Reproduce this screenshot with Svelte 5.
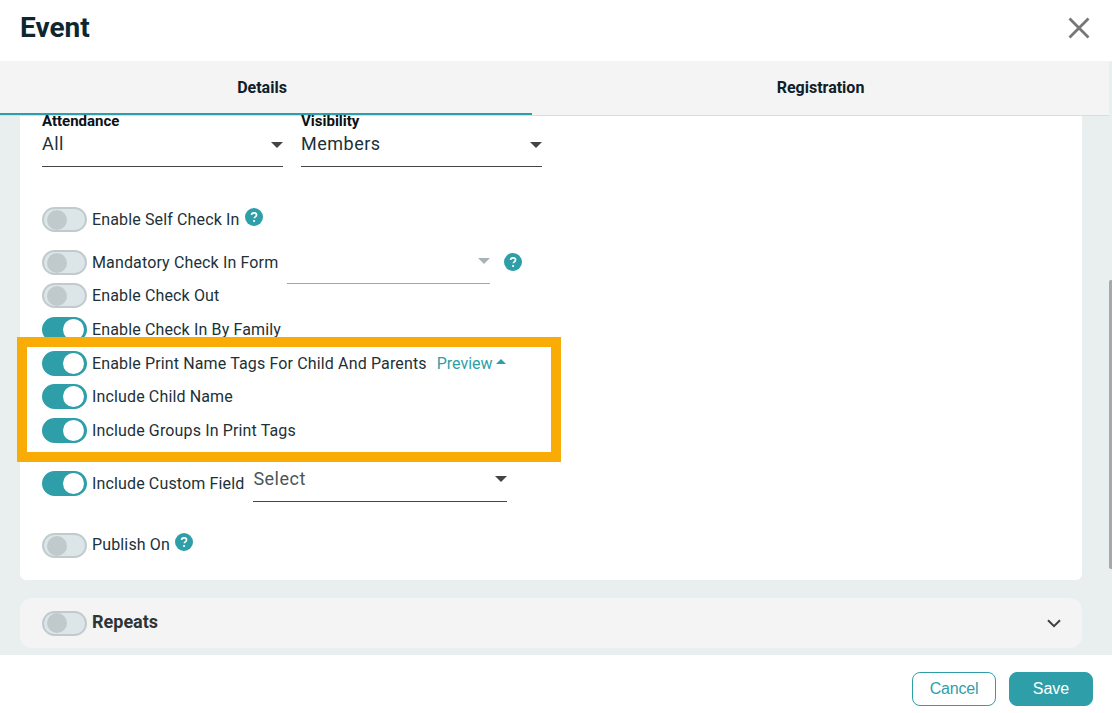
<script>
	// Event modal: details tab with check-in toggles
	const checkRows = [
		{ label: 'Enable Check Out', on: false, cls: 'r-out' },
		{ label: 'Enable Check In By Family', on: true, cls: 'r-family' }
	];
	const printRows = [
		{ label: 'Include Child Name', on: true },
		{ label: 'Include Groups In Print Tags', on: true }
	];
</script>

{#snippet toggle(on)}
	<span class="toggle" class:on><span class="knob"></span></span>
{/snippet}

{#snippet help()}
	<svg class="help" viewBox="0 0 18 18" width="18" height="18" aria-hidden="true">
		<circle cx="9" cy="9" r="9" fill="#2e9fa9" />
		<path d="M6.6 7.1c0-1.4 1.1-2.2 2.5-2.2s2.4.8 2.4 2c0 1-.6 1.5-1.3 2-.6.4-.8.7-.8 1.3" fill="none" stroke="#fff" stroke-width="1.7" />
		<circle cx="9.1" cy="13" r="1.1" fill="#fff" />
	</svg>
{/snippet}

{#snippet caret(cls)}
	<span class="caret {cls}"></span>
{/snippet}

<div class="modal">
	<header class="head">
		<h1>Event</h1>
		<svg class="close" viewBox="0 0 22 22" width="22" height="22" aria-label="Close">
			<path d="M1.5 1.5l19 19M20.5 1.5l-19 19" stroke="#777" stroke-width="2.8" fill="none" />
		</svg>
	</header>

	<main class="main">
		<nav class="tabs">
			<div class="tab active">Details</div>
			<div class="tab second">Registration</div>
		</nav>

		<div class="scroll">
			<section class="card">
				<div class="selects">
					<div class="field">
						<span class="field-label">Attendance</span>
						<div class="field-value"><span>All</span>{@render caret('')}</div>
					</div>
					<div class="field">
						<span class="field-label">Visibility</span>
						<div class="field-value"><span>Members</span>{@render caret('')}</div>
					</div>
				</div>

				<div class="row r-self">
					{@render toggle(false)}
					<span>Enable Self Check In</span>
					{@render help()}
				</div>

				<div class="row r-form">
					{@render toggle(false)}
					<span>Mandatory Check In Form</span>
					<div class="mini-select">{@render caret('light')}</div>
					{@render help()}
				</div>

				{#each checkRows as r}
					<div class="row {r.cls}">
						{@render toggle(r.on)}
						<span>{r.label}</span>
					</div>
				{/each}

				<div class="row r-print">
					{@render toggle(true)}
					<span>Enable Print Name Tags For Child And Parents</span>
					<a class="preview" href="#preview">Preview</a>
					{@render caret('up')}
				</div>

				{#each printRows as r}
					<div class="row r-print-sub">
						{@render toggle(r.on)}
						<span>{r.label}</span>
					</div>
				{/each}

				<div class="row r-custom">
					{@render toggle(true)}
					<span>Include Custom Field</span>
					<div class="custom-select"><span>Select</span>{@render caret('')}</div>
				</div>

				<div class="row r-publish">
					{@render toggle(false)}
					<span class="publish-label">Publish On</span>
					{@render help()}
				</div>

				<div class="highlight"></div>
			</section>

			<section class="repeats">
				{@render toggle(false)}
				<strong>Repeats</strong>
				<svg class="chev" viewBox="0 0 14 9" width="14" height="9" aria-hidden="true">
					<path d="M1 1.2l6 6 6-6" fill="none" stroke="#3a4245" stroke-width="2" />
				</svg>
			</section>

			<div class="scrollbar"></div>
		</div>
	</main>

	<footer class="foot">
		<button class="btn ghost">Cancel</button>
		<button class="btn solid">Save</button>
	</footer>
</div>

<style>
	:global(body) {
		margin: 0;
		background: #fff;
	}

	.modal {
		display: flex;
		flex-direction: column;
		height: 713px;
		overflow: hidden;
		font-family: Roboto, sans-serif;
		color: #1c3138;
	}

	.head {
		height: 61px;
		flex: none;
		display: flex;
		align-items: center;
		justify-content: space-between;
		padding: 0 22px 6px 20px;
		box-sizing: border-box;
	}

	h1 {
		margin: 0;
		font-size: 28px;
		font-weight: 700;
		color: #0c2730;
	}

	.main {
		flex: 1;
		min-height: 0;
		display: flex;
		flex-direction: column;
		background: #e9eeef;
	}

	.tabs {
		height: 55px;
		flex: none;
		display: flex;
		margin-right: 3px;
		background: #f4f4f4;
		border-bottom: 1px solid #d5dfe0;
		box-sizing: border-box;
	}

	.tab {
		display: flex;
		align-items: center;
		justify-content: center;
		font-size: 16px;
		font-weight: 700;
		color: #0f2029;
	}

	.tab.active {
		width: 532px;
		padding-right: 8px;
		box-sizing: border-box;
		height: 54px;
		border-bottom: 2px solid #2e9fa9;
	}

	.tab.second {
		flex: 1;
		height: 54px;
		padding-bottom: 2px;
		box-sizing: border-box;
	}

	.scroll {
		position: relative;
		flex: 1;
		min-height: 0;
		padding: 0 30px 0 20px;
	}

	.card {
		position: relative;
		height: 464px;
		padding: 0 22px;
		box-sizing: border-box;
		background: #fff;
		border-radius: 0 0 6px 6px;
	}

	.selects {
		display: flex;
		gap: 18px;
		height: 51px;
	}

	.field {
		width: 241px;
		height: 51px;
		border-bottom: 1px solid #444;
		box-sizing: border-box;
	}

	.field-label {
		display: block;
		font-size: 15px;
		font-weight: 700;
		line-height: 11px;
		color: #0b1114;
	}

	.field-value {
		display: flex;
		align-items: center;
		justify-content: space-between;
		margin-top: 4px;
		height: 24px;
		font-size: 18px;
		letter-spacing: 0.5px;
	}

	.field-value .caret {
		margin-top: 3px;
	}

	.caret {
		width: 0;
		height: 0;
		border-left: 6px solid transparent;
		border-right: 6px solid transparent;
		border-top: 6px solid #444;
		flex: none;
	}

	.caret.light {
		border-top-color: #a9b3b5;
		margin-top: 2px;
	}

	.caret.up {
		border-top: 0;
		border-left-width: 5px;
		border-right-width: 5px;
		border-bottom: 5px solid #2e9fa9;
		margin: -4px 0 0 -2px;
	}

	.row {
		display: flex;
		align-items: center;
		gap: 5px;
		height: 25px;
		font-size: 16px;
		letter-spacing: 0.14px;
		white-space: nowrap;
	}

	.r-self {
		margin-top: 40px;
	}

	.r-self .help {
		margin-top: -6px;
	}

	.r-publish .help {
		margin-top: -8px;
	}

	.r-form .help {
		margin-top: -1px;
	}

	.help {
		flex: none;
	}

	.r-form {
		margin-top: 18px;
	}

	.mini-select {
		width: 203px;
		height: 42px;
		margin: 0 9px 0 4px;
		display: flex;
		justify-content: flex-end;
		align-items: center;
		padding-bottom: 5px;
		box-sizing: border-box;
		border-bottom: 1px solid #9aa9ab;
	}

	.r-out {
		margin-top: 8px;
	}

	.r-family,
	.r-print {
		margin-top: 9px;
	}

	.r-print-sub {
		margin-top: 8px;
	}

	.r-print-sub + .r-print-sub {
		margin-top: 9px;
	}

	.preview {
		margin-left: 5px;
		color: #2e9fa9;
		text-decoration: none;
		letter-spacing: 0;
	}

	.r-custom {
		margin-top: 28px;
	}

	.custom-select {
		width: 254px;
		height: 37px;
		margin-left: 4px;
		padding-bottom: 9px;
		display: flex;
		align-items: center;
		justify-content: space-between;
		border-bottom: 1px solid #444;
		box-sizing: border-box;
		font-size: 18px;
		letter-spacing: 0.5px;
		color: #4b5558;
	}

	.r-publish {
		margin-top: 37px;
	}

	.publish-label {
		margin-top: -2px;
	}

	.toggle {
		flex: none;
		display: flex;
		align-items: center;
		width: 45px;
		height: 25px;
		padding: 0 3px;
		box-sizing: border-box;
		border: 2px solid #c1cbce;
		border-radius: 13px;
		background: #dce6e8;
	}

	.knob {
		width: 20px;
		height: 20px;
		border-radius: 50%;
		background: #c0c9cc;
	}

	.toggle.on {
		justify-content: flex-end;
		padding: 0 1px;
		border-color: #2e9fa9;
		background: #2e9fa9;
	}

	.toggle.on .knob {
		width: 21px;
		height: 21px;
		background: #fff;
	}

	.highlight {
		position: absolute;
		left: -3px;
		top: 221px;
		width: 544px;
		height: 125px;
		box-sizing: border-box;
		border: 10px solid #f9ab06;
		pointer-events: none;
	}

	.repeats {
		display: flex;
		align-items: center;
		gap: 5px;
		height: 50px;
		margin-top: 18px;
		padding: 0 21px 0 22px;
		box-sizing: border-box;
		background: #f4f4f4;
		border-radius: 12px;
	}

	.repeats strong {
		margin-top: -4px;
		font-size: 18px;
		font-weight: 700;
		color: #2f3436;
	}

	.chev {
		margin-left: auto;
	}

	.scrollbar {
		position: absolute;
		right: 0;
		top: 164px;
		width: 3px;
		height: 289px;
		border-radius: 2px 0 0 2px;
		background: #a8a8a8;
	}

	.foot {
		height: 58px;
		flex: none;
		display: flex;
		justify-content: flex-end;
		align-items: flex-start;
		gap: 13px;
		padding: 17px 19px 0 0;
		box-sizing: border-box;
		background: #fff;
	}

	.btn {
		width: 84px;
		height: 34px;
		border-radius: 8px;
		box-sizing: border-box;
		font-family: 'Liberation Sans', Arial, sans-serif;
		font-size: 16px;
		padding: 0;
	}

	.ghost {
		background: #fff;
		border: 1px solid #2e9fa9;
		color: #2e9fa9;
		letter-spacing: -0.2px;
	}

	.solid {
		background: #2e9fa9;
		border: 1px solid #2e9fa9;
		color: #fff;
	}
</style>
